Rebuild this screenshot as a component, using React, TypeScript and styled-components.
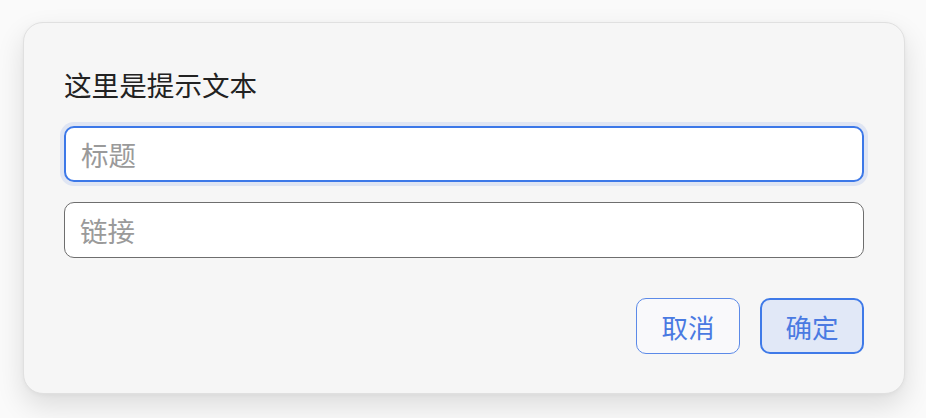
import React from "react";
import styled, { createGlobalStyle } from "styled-components";

const Global = createGlobalStyle`
  html, body { margin: 0; padding: 0; background: #fafafa; }
  body { font-family: "Noto Sans CJK SC", "Noto Sans", sans-serif; }
  * { box-sizing: border-box; }
`;

const Page = styled.div`
  width: 926px;
  height: 418px;
  padding: 22px 21px 24px 23px;
  background: #fafafa;
`;

const Card = styled.div`
  height: 372px;
  background: #f6f6f6;
  border: 1px solid #e0e0e0;
  border-radius: 20px;
  box-shadow: 0 12px 28px rgba(0, 0, 0, 0.12), 0 1px 4px rgba(0, 0, 0, 0.04);
  padding: 43px 40px 40px 40px;
  display: flex;
  flex-direction: column;
`;

const Prompt = styled.div`
  font-size: 27.6px;
  line-height: 36px;
  color: #222;
  margin-bottom: 24px;
`;

const Field = styled.input<{ $focused?: boolean }>`
  width: 100%;
  height: 56px;
  font-family: inherit;
  font-size: 27.5px;
  color: #222;
  background: #fff;
  border-radius: 10px;
  padding: 0 15px;
  outline: none;
  border: ${(p) => (p.$focused ? "2px solid #3c78e8" : "1px solid #6e6e6e")};
  box-shadow: ${(p) => (p.$focused ? "0 0 0 4px #dfe5f3" : "none")};
  &::placeholder { color: #9a9a9a; }
`;

const Fields = styled.div`
  display: flex;
  flex-direction: column;
  gap: 20px;
`;

const Actions = styled.div`
  display: flex;
  justify-content: flex-end;
  gap: 20px;
  margin-top: 40px;
`;

const Button = styled.button<{ $primary?: boolean }>`
  width: 104px;
  height: 56px;
  border-radius: 10px;
  font-family: inherit;
  font-size: 26.5px;
  color: #4a7ae2;
  background: ${(p) => (p.$primary ? "#e1e8f7" : "#f9f9fb")};
  border: ${(p) => (p.$primary ? "2px solid #3f7ae8" : "1px solid #5c8ae8")};
  padding: 0;
  cursor: pointer;
`;

export default function App() {
  return (
    <>
      <Global />
      <Page>
        <Card>
          <Prompt>这里是提示文本</Prompt>
          <Fields>
            <Field $focused placeholder="标题" />
            <Field placeholder="链接" />
          </Fields>
          <Actions>
            <Button>取消</Button>
            <Button $primary>确定</Button>
          </Actions>
        </Card>
      </Page>
    </>
  );
}
